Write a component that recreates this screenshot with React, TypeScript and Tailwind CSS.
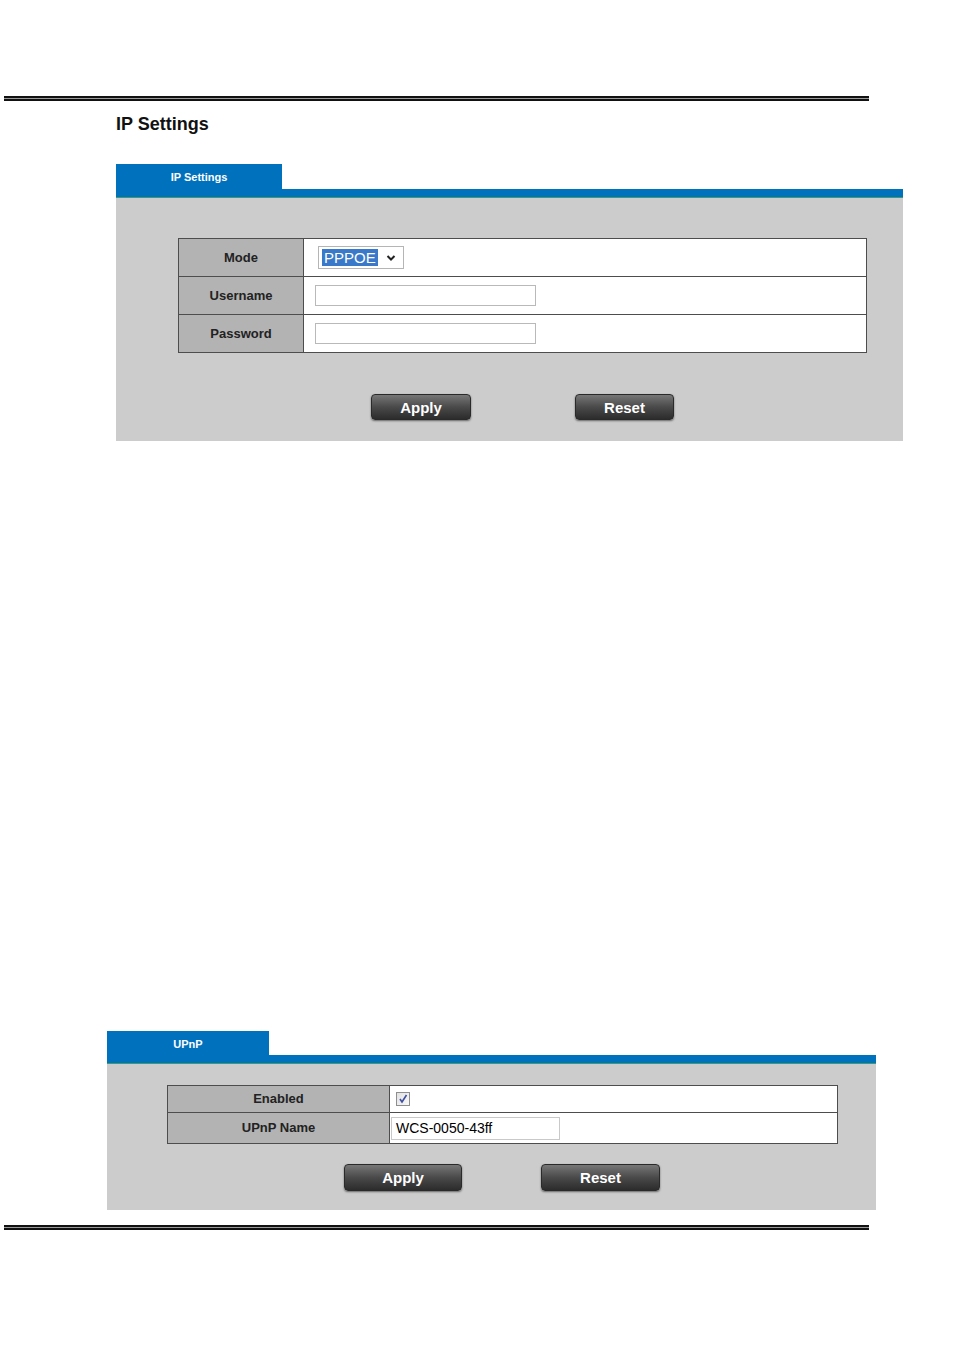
import React from 'react';

const font = { fontFamily: '"Liberation Sans", Arial, sans-serif' };

function DoubleRule() {
  return (
    <div className="ml-[4px] w-[865px]">
      <div className="h-[2px] bg-[#111]" />
      <div className="h-[1px] bg-[#9a9a9a]" />
      <div className="h-[2px] bg-[#111]" />
    </div>
  );
}

function DarkButton({ label, w, h }: { label: string; w: string; h: string }) {
  return (
    <button
      className={`${w} ${h} rounded-[4px] border border-[#2a2a2a] bg-gradient-to-b from-[#777] via-[#4a4a4a] to-[#2c2c2c] pt-[2px] text-[15px] font-bold text-white shadow-[0_1px_2px_rgba(0,0,0,0.5)]`}
    >
      {label}
    </button>
  );
}

function Tab({ title, w, h }: { title: string; w: string; h: string }) {
  return (
    <>
      <div className={`${w} ${h} bg-[#0071bd] flex items-center justify-center pt-[2px]`}>
        <span className="text-[11px] font-bold text-white">{title}</span>
      </div>
      <div className="h-[8px] bg-[#0071bd]" />
      <div className="h-[1px] bg-[#3f9a74]" />
    </>
  );
}

function TextBox({ value }: { value?: string }) {
  return (
    <div className="w-[221px] h-[21px] border border-[#b9b9b9] bg-white flex items-center px-[4px] text-[14px] text-black">
      {value}
    </div>
  );
}

export default function App() {
  return (
    <div className="w-[954px] h-[1350px] bg-white pt-[96px]" style={font}>
      <DoubleRule />

      <h1 className="mt-[13px] ml-[116px] text-[18px] leading-[21px] font-bold text-[#111]">IP Settings</h1>

      {/* IP Settings panel */}
      <section className="mt-[29px] ml-[116px] w-[787px]">
        <Tab title="IP Settings" w="w-[166px]" h="h-[25px]" />
        <div className="bg-[#cccccc] pt-[40px] pb-[21px]">
          <table className="ml-[62px] w-[689px] border-collapse border border-[#4d4d4d]">
            <tbody>
              <tr className="h-[38px]">
                <td className="w-[125px] border border-[#4d4d4d] bg-[#b3b3b3] text-center text-[13px] font-bold text-[#222]">Mode</td>
                <td className="border border-[#4d4d4d] bg-white pl-[14px]">
                  <div className="w-[86px] h-[23px] border border-[#b5b5b5] bg-white flex items-center pl-[3px]">
                    <span className="bg-[#3a78c9] text-white text-[15px] leading-[17px] px-[2px]">PPPOE</span>
                    <svg className="ml-[8px]" width="10" height="8" viewBox="0 0 10 8">
                      <path d="M1.5 2 L5 5.5 L8.5 2" fill="none" stroke="#222" strokeWidth="2" />
                    </svg>
                  </div>
                </td>
              </tr>
              <tr className="h-[38px]">
                <td className="border border-[#4d4d4d] bg-[#b3b3b3] text-center text-[13px] font-bold text-[#222]">Username</td>
                <td className="border border-[#4d4d4d] bg-white pl-[11px]">
                  <TextBox />
                </td>
              </tr>
              <tr className="h-[38px]">
                <td className="border border-[#4d4d4d] bg-[#b3b3b3] text-center text-[13px] font-bold text-[#222]">Password</td>
                <td className="border border-[#4d4d4d] bg-white pl-[11px]">
                  <TextBox />
                </td>
              </tr>
            </tbody>
          </table>
          <div className="mt-[41px] pl-[255px] flex gap-[104px]">
            <DarkButton label="Apply" w="w-[100px]" h="h-[26px]" />
            <DarkButton label="Reset" w="w-[99px]" h="h-[26px]" />
          </div>
        </div>
      </section>

      {/* UPnP panel */}
      <section className="mt-[590px] ml-[107px] w-[769px]">
        <Tab title="UPnP" w="w-[162px]" h="h-[24px]" />
        <div className="bg-[#cccccc] pt-[21px] pb-[19px]">
          <table className="ml-[60px] w-[671px] border-collapse border border-[#4d4d4d]">
            <tbody>
              <tr className="h-[27px]">
                <td className="w-[222px] border border-[#4d4d4d] bg-[#b3b3b3] text-center text-[13px] font-bold text-[#222]">Enabled</td>
                <td className="border border-[#4d4d4d] bg-white pl-[6px]">
                  <div className="w-[14px] h-[14px] border border-[#8e8e8e] bg-gradient-to-br from-[#e2e2e2] to-[#f8f8f8] flex items-center justify-center">
                    <svg width="10" height="10" viewBox="0 0 10 10">
                      <path d="M2 5 L4 8 L8.5 1" fill="none" stroke="#3d4f9e" strokeWidth="1.6" />
                    </svg>
                  </div>
                </td>
              </tr>
              <tr className="h-[31px]">
                <td className="border border-[#4d4d4d] bg-[#b3b3b3] text-center text-[13px] font-bold text-[#222]">UPnP Name</td>
                <td className="border border-[#4d4d4d] bg-white pl-[1px]">
                  <div className="w-[169px] h-[23px] border border-[#c9c9c9] bg-white flex items-center px-[4px] text-[14px] text-black">
                    WCS-0050-43ff
                  </div>
                </td>
              </tr>
            </tbody>
          </table>
          <div className="mt-[20px] pl-[237px] flex gap-[79px]">
            <DarkButton label="Apply" w="w-[118px]" h="h-[27px]" />
            <DarkButton label="Reset" w="w-[119px]" h="h-[27px]" />
          </div>
        </div>
      </section>

      <div className="mt-[15px]">
        <DoubleRule />
      </div>
    </div>
  );
}
